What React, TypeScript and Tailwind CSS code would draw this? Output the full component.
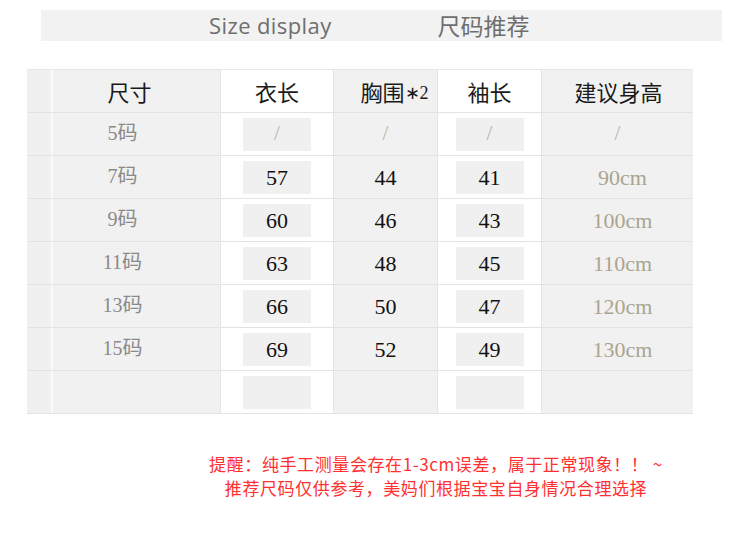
import React from 'react';

const serif = "font-['Liberation_Serif','Noto_Sans_CJK_SC',serif]";
const sans = "font-['Noto_Sans_CJK_SC','Noto_Sans',sans-serif]";

type Row = {
  size: string;
  length: string;
  chest: string;
  sleeve: string;
  height: string;
};

const rows: Row[] = [
  { size: '5码', length: '/', chest: '/', sleeve: '/', height: '/' },
  { size: '7码', length: '57', chest: '44', sleeve: '41', height: '90cm' },
  { size: '9码', length: '60', chest: '46', sleeve: '43', height: '100cm' },
  { size: '11码', length: '63', chest: '48', sleeve: '45', height: '110cm' },
  { size: '13码', length: '66', chest: '50', sleeve: '47', height: '120cm' },
  { size: '15码', length: '69', chest: '52', sleeve: '49', height: '130cm' },
  { size: '', length: '', chest: '', sleeve: '', height: '' },
];

function Value({ text, muted }: { text: string; muted?: string }) {
  if (text === '/') {
    return <span className={`${serif} text-[21px] text-[#b9b6ab]`}>/</span>;
  }
  return <span className={`${serif} text-[22px] ${muted ?? 'text-[#111]'}`}>{text}</span>;
}

function BoxCell({ text }: { text: string }) {
  return (
    <div className="flex items-center justify-center border-l border-[#e4e4e4] bg-white">
      <div className="flex h-[33px] w-[68px] items-center justify-center bg-[#f0f0f0]">
        <Value text={text} />
      </div>
    </div>
  );
}

function GrayCell({ text, muted }: { text: string; muted?: string }) {
  return (
    <div className="flex items-center justify-center border-l border-[#e4e4e4] bg-[#f1f1f1]">
      <Value text={text} muted={muted} />
    </div>
  );
}

const cols = 'grid grid-cols-[26px_167px_113px_104px_104px_152px]';

export default function App() {
  return (
    <div className="relative h-[536px] w-[750px] overflow-hidden bg-white">
      {/* title band */}
      <div className="ml-[41px] mt-[10px] flex h-[31px] w-[681px] items-center bg-[#f2f2f2] pl-[168px]">
        <span className="font-['Open_Sans',sans-serif] text-[22px] tracking-[0.4px] text-[#6e6e6e]">Size display</span>
        <span className={`${sans} ml-[106px] text-[23px] text-[#6e6e6e]`}>尺码推荐</span>
      </div>

      {/* size table */}
      <div className="ml-[27px] mt-[28px] w-[666px] border-t border-[#e6e6e6]">
        <div className={`${cols} h-[43px] border-b border-[#e3e3e3]`}>
          <div className="border-r-2 border-[#fbfbfb] bg-[#f0f0f0]" />
          <div className={`${sans} flex items-center justify-center bg-[#f1f1f1] pr-[14px] text-[22px] text-[#1a1a1a]`}>尺寸</div>
          <div className={`${sans} flex items-center justify-center border-l border-[#e4e4e4] bg-white text-[22px] text-[#1a1a1a]`}>衣长</div>
          <div className={`${sans} flex items-center justify-center border-l border-[#e4e4e4] bg-[#f1f1f1] pl-[18px] text-[22px] text-[#1a1a1a]`}>
            胸围<span className={`${serif} pt-[4px] text-[18px]`}>∗2</span>
          </div>
          <div className={`${sans} flex items-center justify-center border-l border-[#e4e4e4] bg-white text-[22px] text-[#1a1a1a]`}>袖长</div>
          <div className={`${sans} flex items-center justify-center border-l border-[#e4e4e4] bg-[#f1f1f1] pl-[2px] text-[22px] text-[#1a1a1a]`}>建议身高</div>
        </div>

        {rows.map((r, i) => (
          <div key={i} className={`${cols} h-[43px] border-b border-[#e3e3e3]`}>
            <div className="border-r-2 border-[#fbfbfb] bg-[#f0f0f0]" />
            <div className={`${serif} flex items-center justify-center bg-[#f1f1f1] pb-[3px] pr-[28px] text-[20px] text-[#8a8a8a]`}>
              {r.size}
            </div>
            <BoxCell text={r.length} />
            <GrayCell text={r.chest} />
            <BoxCell text={r.sleeve} />
            <GrayCell text={r.height} muted="text-[#aaa58f] pl-[10px]" />
          </div>
        ))}
      </div>

      {/* note */}
      <div className={`${sans} mt-[38px] flex flex-col items-center pl-[122px] text-[17px] leading-[24px] tracking-[0.6px] text-[#ff3030]`}>
        <p>提醒：纯手工测量会存在1-3cm误差，属于正常现象！！ ~</p>
        <p>推荐尺码仅供参考，美妈们根据宝宝自身情况合理选择</p>
      </div>
    </div>
  );
}
